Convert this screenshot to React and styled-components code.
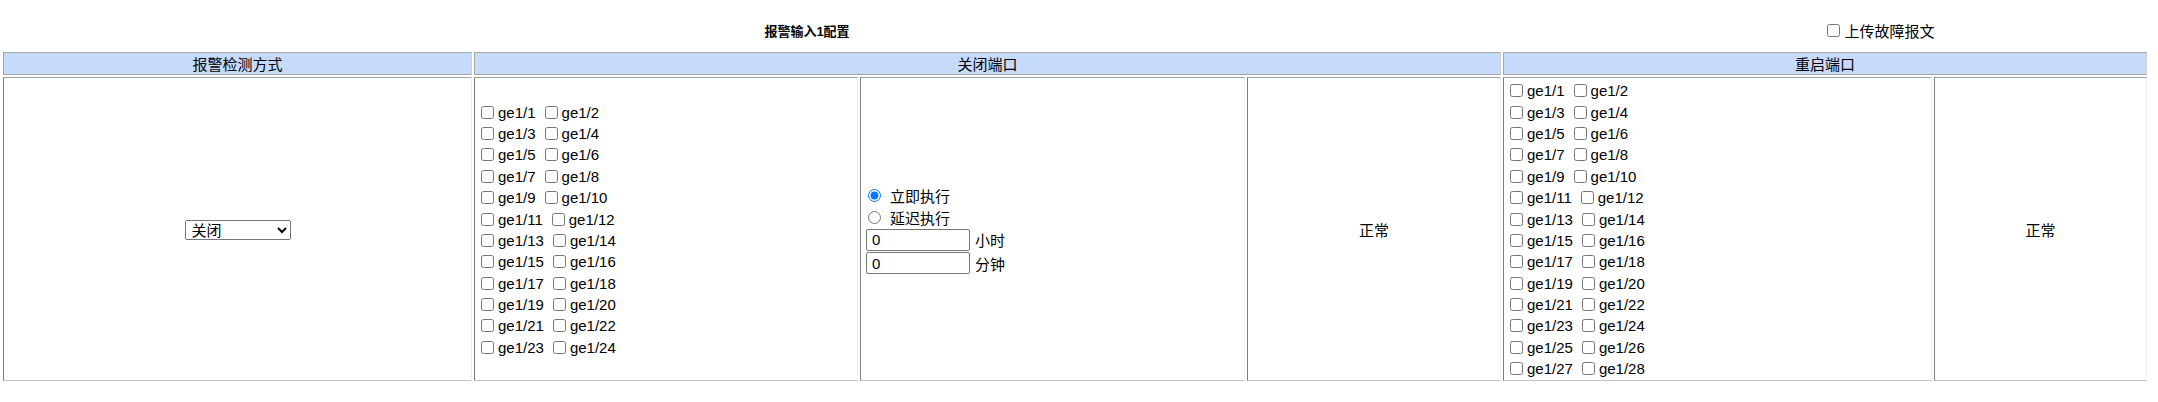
import React from 'react';
import styled, { createGlobalStyle } from 'styled-components';

const GlobalStyle = createGlobalStyle`
  body {
    margin: 0;
    background: #fff;
    color: #000;
    font-family: 'Liberation Sans', 'Noto Sans CJK SC', Arial, sans-serif;
    font-size: 15px;
  }
`;

const Page = styled.div`
  width: 2144px;
  padding-left: 3px;
`;

const TopBar = styled.div`
  display: grid;
  grid-template-columns: 1608px 1fr;
  align-items: center;
  height: 20px;
  margin: 20px 0 12px;
`;

const Title = styled.div`
  text-align: center;
  font-size: 13px;
  font-weight: bold;
`;

const UploadLabel = styled.label`
  display: flex;
  align-items: center;
  justify-content: center;
  white-space: nowrap;
`;

const ConfigGrid = styled.div`
  display: grid;
  grid-template-columns: 469px 384px 385px 254px 429px 213px;
  gap: 2px;
`;

const HeadCell = styled.div`
  grid-column: span ${({ span }) => span || 1};
  box-sizing: border-box;
  height: 23px;
  display: flex;
  align-items: center;
  justify-content: center;
  background: #c6dafc;
  border: 1px solid #a6a6a6;
  border-right-color: #d2d2d2;
`;

const BodyCell = styled.div`
  box-sizing: border-box;
  display: flex;
  flex-direction: column;
  justify-content: center;
  align-items: ${({ center }) => (center ? 'center' : 'flex-start')};
  padding: 2px 2px 1px;
  border-top: 1px solid #a0a0a0;
  border-left: 1px solid #808080;
  border-bottom: 1px solid #c4c4c4;
  border-right: 1px solid #f0f0f0;
`;

const PortRow = styled.div`
  display: flex;
  align-items: center;
  height: 21.4px;
  white-space: nowrap;
`;

const Port = styled.label`
  display: inline-flex;
  align-items: center;
  margin-right: 5px;
`;

const Check = styled.input.attrs({ type: 'checkbox' })`
  width: 13px;
  height: 13px;
  margin: 0 4px 0 4px;
`;

const RadioRow = styled.label`
  display: flex;
  align-items: center;
  height: 22px;
`;

const Radio = styled.input.attrs({ type: 'radio', name: 'exec' })`
  width: 13px;
  height: 13px;
  margin: 0 9px 0 5px;
`;

const TimeRow = styled.div`
  display: flex;
  align-items: center;
  height: 23.5px;
  margin-left: 3px;
`;

const TimeInput = styled.input`
  box-sizing: border-box;
  width: 104px;
  height: 22px;
  margin: 0 5px 0 0;
  padding: 1px 5px;
  border: 1px solid #767676;
  border-radius: 2px;
  font-family: inherit;
  font-size: 15px;
`;

const ModeSelect = styled.select`
  width: 106px;
  height: 20px;
  padding: 0 2px;
  font-family: inherit;
  font-size: 15px;
  color: #000;
`;

const ports = (count) => {
  const rows = [];
  for (let i = 1; i <= count; i += 2) rows.push([`ge1/${i}`, `ge1/${i + 1}`]);
  return rows;
};

const PortList = ({ count }) => (
  <div>
    {ports(count).map((pair) => (
      <PortRow key={pair[0]}>
        {pair.map((name) => (
          <Port key={name}>
            <Check />
            {name}
          </Port>
        ))}
      </PortRow>
    ))}
  </div>
);

const App = () => (
  <Page>
    <GlobalStyle />
    <TopBar>
      <Title>报警输入1配置</Title>
      <UploadLabel>
        <Check />
        上传故障报文
      </UploadLabel>
    </TopBar>
    <ConfigGrid>
      <HeadCell>报警检测方式</HeadCell>
      <HeadCell span={3}>关闭端口</HeadCell>
      <HeadCell span={2}>重启端口</HeadCell>

      <BodyCell center>
        <ModeSelect defaultValue="off">
          <option value="off">关闭</option>
          <option value="on">开启</option>
        </ModeSelect>
      </BodyCell>
      <BodyCell>
        <PortList count={24} />
      </BodyCell>
      <BodyCell>
        <RadioRow>
          <Radio defaultChecked />
          立即执行
        </RadioRow>
        <RadioRow>
          <Radio />
          延迟执行
        </RadioRow>
        <TimeRow>
          <TimeInput defaultValue="0" />
          小时
        </TimeRow>
        <TimeRow>
          <TimeInput defaultValue="0" />
          分钟
        </TimeRow>
      </BodyCell>
      <BodyCell center>正常</BodyCell>
      <BodyCell>
        <PortList count={28} />
      </BodyCell>
      <BodyCell center>正常</BodyCell>
    </ConfigGrid>
  </Page>
);

export default App;
